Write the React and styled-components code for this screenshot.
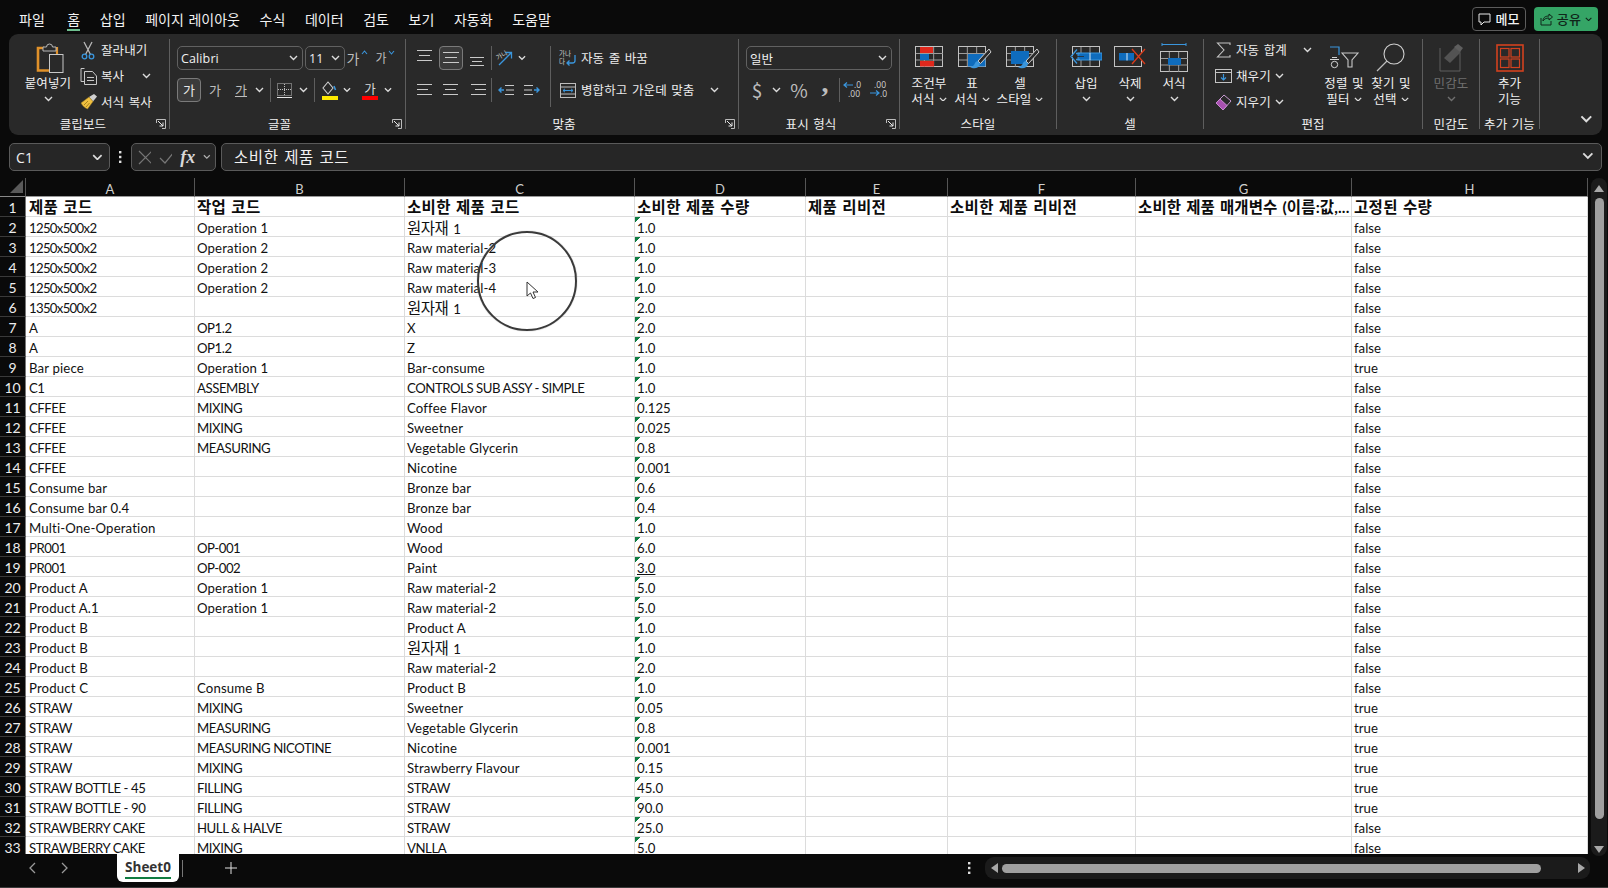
import React from 'react';
import styled, { createGlobalStyle } from 'styled-components';

const UI = '"Noto Sans CJK KR", "Open Sans", sans-serif';
const LAT = '"Open Sans", "Noto Sans CJK KR", sans-serif';
const CELL = 'Lato, "Noto Sans CJK KR", sans-serif';
const TXT = '#ececec';
const GL = '#c9c9c9';
const BL = '#3a96dd';
const DBL = '#0f6cbd';

const Global = createGlobalStyle`
  html, body { margin: 0; padding: 0; background: #0a0a0a; overflow: hidden; }
  * { box-sizing: border-box; }
`;

const Page = styled.div`
  width: 1608px; height: 888px; display: flex; flex-direction: column;
  background: #0a0a0a; color: ${TXT}; font: 12.5px/16px ${UI}; overflow: hidden;
  border-bottom: 1px solid #3a3a3a; letter-spacing: .12px; word-spacing: 1.5px;
`;
const TitleRow = styled.div`display: flex; align-items: flex-start; height: 34px; padding: 0 10px 0 19px;`;
const Tabs = styled.nav`display: flex; gap: 19.6px; padding-top: 9px; letter-spacing: 0;`;
const Tab = styled.div`
  font-size: 14px; line-height: 20px; color: #f2f2f2; height: 22px; margin-left: ${p => (p.$active ? 3 : 0)}px;
  border-bottom: 2px solid ${p => (p.$active ? '#6fbf8f' : 'transparent')};
`;
const Actions = styled.div`display: flex; gap: 8px; margin-left: auto; padding-top: 7px;`;
const MemoBtn = styled.div`
  width: 54px; height: 24px; border: 1px solid #5c5c5c; border-radius: 4px; display: flex;
  align-items: center; justify-content: center; gap: 4px; font-size: 13px; font-weight: 500; color: #f2f2f2;
`;
const ShareBtn = styled.div`
  width: 64px; height: 24px; border-radius: 4px; background: #35a566; display: flex;
  align-items: center; justify-content: center; gap: 4px; font-size: 13px; font-weight: 500; color: #10261a;
`;

const Ribbon = styled.div`
  display: flex; height: 101px; margin: 0 6px 0 9px; background: #292929; border-radius: 9px;
`;
const Group = styled.section`
  width: ${p => p.$w}px; display: flex; flex-direction: column; position: relative; flex: none;
`;
const Sep = styled.div`width: 1px; margin: 5px 0 6px; background: #5e5e5e; flex: none;`;
const Body = styled.div`
  height: 81px; display: flex; padding: ${p => p.$pt ?? 12}px 0 0 ${p => p.$pl ?? 0}px;
`;
const GroupLabel = styled.div`
  height: 18px; line-height: 18px; text-align: center; font-size: 12.5px; color: #f0f0f0; padding-right: ${p => p.$pr ?? 0}px;
`;
const Launcher = styled.svg`position: absolute; right: 3px; bottom: 6px; width: 10px; height: 10px;`;
const Col = styled.div`
  display: flex; flex-direction: column; flex: none; width: ${p => (p.$w ? `${p.$w}px` : 'auto')};
  gap: ${p => p.$gap ?? 0}px; padding-left: ${p => p.$pl ?? 0}px;
`;
const Row = styled.div`display: flex; align-items: center; height: ${p => p.$h ?? 24}px; flex: none;`;
const Slot = styled.div`
  width: ${p => p.$w}px; flex: none; display: flex; align-items: center; justify-content: center;
  height: 24px; color: ${p => p.$c ?? '#bdbdbd'}; font-size: ${p => p.$fs ?? 13}px;
`;
const IconSlot = styled.div`width: 18px; flex: none; display: flex; justify-content: center; margin-right: 4px;`;
const ChevBox = styled.span`display: inline-flex; margin-left: ${p => p.$ml ?? 0}px;`;
const Divider = styled.div`width: 1px; height: ${p => p.$h ?? 24}px; background: #5e5e5e; flex: none;`;
const Combo = styled.div`
  width: ${p => p.$w}px; height: 24px; flex: none; display: flex; align-items: center; justify-content: space-between;
  padding: 0 4px 0 3px; border: 1px solid #616161; border-radius: 5px; font: 12.5px ${LAT}; color: #f0f0f0;
`;
const Pressed = styled.div`
  width: 24px; height: 24px; flex: none; display: flex; align-items: center; justify-content: center;
  border: 1px solid #7a7a7a; border-radius: 4px; background: #3b3b3b; color: #e8e8e8; font-size: 13px;
`;
const Big = styled.div`
  width: ${p => p.$w}px; flex: none; display: flex; flex-direction: column; align-items: center;
  color: ${p => (p.$muted ? '#6f6f6f' : '#f0f0f0')}; margin-top: ${p => p.$mt ?? 0}px;
`;
const BigIcon = styled.div`
  height: 29px; margin: 0 0 3px ${p => p.$ml ?? 0}px; display: flex; align-items: center; justify-content: center;
`;
const Line = styled.div`height: 16px; display: flex; align-items: center; gap: 4px; white-space: nowrap;`;
const CollapseBox = styled.div`flex: 1; display: flex; justify-content: flex-end; align-items: flex-end; padding: 0 9px 12px 0;`;
const Spacer = styled.div`width: ${p => p.$w}px; flex: none;`;
const FontColor = styled.div`display: flex; flex-direction: column; align-items: center; width: 16px; color: #d8d8d8; font-size: 12.5px; line-height: 15px;`;
const ColorBar = styled.div`width: 16px; height: 4px; background: #f00; flex: none;`;
const Grow = styled.span`display: inline-flex; align-items: flex-start; gap: 1px;`;
const Comma = styled.span`font: 700 28px/24px "Liberation Serif", serif; color: #bdbdbd; transform: translateY(-7px);`;

const FormulaRow = styled.div`display: flex; align-items: center; height: 28px; margin: 8px 6px 0 9px;`;
const NameBox = styled.div`
  width: 101px; height: 28px; flex: none; display: flex; align-items: center; justify-content: space-between;
  padding: 0 6px; background: #262626; border: 1px solid #5a5a5a; border-radius: 5px; font: 14px ${LAT}; color: #f0f0f0;
`;
const Dots = styled.div`width: 21px; flex: none; display: flex; justify-content: center;`;
const FxBox = styled.div`
  width: 85px; height: 28px; flex: none; display: flex; align-items: center; gap: 8px; padding: 0 4px 0 6px;
  background: #262626; border: 1px solid #5a5a5a; border-radius: 5px;
`;
const Fx = styled.span`font: italic 700 18px "Liberation Serif", serif; color: #d8d8d8; letter-spacing: 0;`;
const FormulaInput = styled.div`
  flex: 1; height: 28px; margin-left: 5px; display: flex; align-items: center; justify-content: space-between;
  padding: 0 7px 2px 12px; background: #262626; border: 1px solid #5a5a5a; border-radius: 5px;
  font: 15.5px ${UI}; letter-spacing: .6px; color: #f2f2f2;
`;

const SheetArea = styled.div`display: flex; height: 676px; margin-top: 7px; flex: none;`;
const Sheet = styled.div`
  width: 1588px; height: 676px; overflow: hidden; position: relative; flex: none; display: grid;
  grid-template-columns: 26px 169px 210px 230px 171px 142px 188px 216px 236px;
  grid-auto-rows: 20px; grid-template-rows: 19px; background: #fff; letter-spacing: 0; word-spacing: 0;
`;
const Corner = styled.div`background: #0a0a0a; display: flex; align-items: flex-end; justify-content: flex-end; padding: 0 2px 3px 0; border-right: 1px solid #555; border-bottom: 1px solid #888;`;
const ColHead = styled.div`
  background: #0a0a0a; color: #cfcfcf; font: 13px/22px ${CELL}; text-align: center;
  border-right: 1px solid #555; border-bottom: 1px solid #999;
`;
const RowHead = styled.div`
  background: #0a0a0a; color: #ededed; font: 14px/21px ${CELL}; text-align: center;
  border-bottom: 1px solid #3a3a3a; border-right: 1px solid #777;
`;
const Cell = styled.div`
  background: #fff; color: #111; font: 13.2px/22px ${CELL}; padding-left: ${p => p.$pl ?? 2}px; white-space: nowrap; overflow: hidden;
  border-right: 1px solid #dcdcdc; border-bottom: 1px solid #dcdcdc; letter-spacing: ${p => p.$ls ?? 0}px;
`;
const NumCell = styled(Cell)`
  background: linear-gradient(135deg, #107c41 3.6px, transparent 3.7px) no-repeat #fff;
  text-decoration: ${p => (p.$u ? 'underline' : 'none')};
`;
const HeadCell = styled(Cell)`
  font: 700 15.5px/20px ${CELL}; letter-spacing: ${p => (p.$tight ? '.15px' : '.35px')}; word-spacing: 1px; color: #0c0c0c;
`;
const Kr = styled.span`font-size: 15.5px; margin-right: 2px;`;
const Ring = styled.div`
  position: absolute; left: 477px; top: 53px; width: 100px; height: 100px; border-radius: 50%;
  border: 2px solid #3a3a3a; box-shadow: 0 0 1px #777;
`;
const Pointer = styled.svg`position: absolute; left: 526px; top: 103px;`;

const VScroll = styled.div`
  width: 16px; height: 678px; margin: 0 1px 0 3px; background: #1b1b1b; border-radius: 8px; flex: none;
  display: flex; flex-direction: column; align-items: center; padding-top: 6px;
`;
const VThumb = styled.div`width: 9px; height: 621px; margin-top: 5px; border-radius: 5px; background: #a0a0a0;`;
const VDown = styled.div`margin-top: 26px; display: flex;`;

const BottomBar = styled.div`flex: 1; display: flex; align-items: flex-start; min-height: 0;`;
const Nav = styled.div`width: 117px; height: 28px; display: flex; align-items: center; flex: none; padding-left: 28px; gap: 25px;`;
const SheetTab = styled.div`
  width: 62px; height: 28px; background: #fff; border-radius: 0 0 6px 6px; flex: none; display: flex; justify-content: center;
`;
const SheetName = styled.div`
  font: 700 13.5px/20px ${LAT}; color: #333; height: 25px; padding-top: 3px; border-bottom: 2px solid #107c41; letter-spacing: 0;
`;
const TabSep = styled.div`width: 1px; height: 17px; background: #777; margin: 6px 0 0 3px; flex: none;`;
const PlusBox = styled.div`width: 95px; height: 28px; display: flex; align-items: center; justify-content: center; flex: none;`;
const MoreDots = styled.div`margin-left: auto; width: 16px; height: 28px; display: flex; align-items: center; justify-content: center; flex: none;`;
const HScroll = styled.div`
  width: 605px; height: 22px; margin: 3px 18px 0 8px; background: #1b1b1b; border-radius: 9px; flex: none;
  display: flex; align-items: center; padding: 0 4px 0 5px;
`;
const HThumb = styled.div`width: 539px; height: 9px; margin-left: 3px; border-radius: 5px; background: #a0a0a0;`;
const HRight = styled.div`margin-left: auto; display: flex;`;

const Chev = ({ s = 1, c = '#dcdcdc' }) => (
  <svg width={9 * s} height={5.5 * s} viewBox="0 0 9 5.5"><path d="M1 1l3.5 3.5L8 1" fill="none" stroke={c} strokeWidth="1.4" /></svg>
);
const Tri = ({ d, c = '#a8a8a8' }) => {
  const p = { u: 'M1 8L6 1l5 7z', d: 'M1 1l5 7 5-7z', l: 'M8 1L1 6l7 5z', r: 'M1 1l7 5-7 5z' }[d];
  return <svg width={d === 'u' || d === 'd' ? 12 : 9} height={d === 'u' || d === 'd' ? 9 : 12}><path d={p} fill={c} /></svg>;
};
const Lines = ({ w = 16, rows }) => (
  <svg width={w} height={16}>{rows.map(([a, b, y], i) => <path key={i} d={`M${a} ${y}.5H${b}`} stroke={GL} strokeWidth="1" />)}</svg>
);
const LauncherIcon = () => (
  <Launcher viewBox="0 0 10 10"><path d="M.5 4V.5H9.5V9.5H6" fill="none" stroke="#bcbcbc" /><path d="M2 2l5 5M7 3.5V7H3.5" fill="none" stroke="#e8e8e8" /></Launcher>
);
const PasteIcon = () => (
  <svg width="28" height="30"><path d="M8 5H2V27.5H14" fill="none" stroke="#e0912a" strokeWidth="2.6" /><path d="M18 5h3v6" fill="none" stroke="#e0912a" strokeWidth="2.2" /><path d="M7 8V4h3.5a3 3 0 0 1 6 0H20v4z" fill="#292929" stroke="#b8b8b8" /><rect x="13.5" y="11.5" width="13.5" height="18" fill="#292929" stroke="#c8c8c8" /></svg>
);
const ScissorsIcon = () => (
  <svg width="14" height="19"><path d="M3 1l6.5 12.5M11 1L4.5 13.5" stroke="#b8b8b8" strokeWidth="1.3" fill="none" /><circle cx="3.5" cy="15.5" r="2.3" fill="none" stroke={BL} strokeWidth="1.3" /><circle cx="10.5" cy="15.5" r="2.3" fill="none" stroke={BL} strokeWidth="1.3" /></svg>
);
const CopyIcon = () => (
  <svg width="17" height="17"><path d="M4.5.5H1V13.5H4" fill="none" stroke="#c8c8c8" /><path d="M4.5 3.5v13h12V8l-4-4.5z" fill="none" stroke="#c8c8c8" /><path d="M7 9.5h7M7 12.5h7" stroke="#c8c8c8" /></svg>
);
const BrushIcon = () => (
  <svg width="17" height="16"><path d="M9 3l5-3 3 2.5-4 5z" fill="#cfcfcf" /><path d="M1 9l8-6 4 4.5-5.5 7.5C5 14 2.5 12 1 9z" fill="#f0c040" stroke="#9a7a20" strokeWidth=".5" /><path d="M4 11l4-4M6 13l3.5-4" stroke="#8a6a10" strokeWidth=".7" /></svg>
);
const BorderIcon = () => (
  <svg width="15" height="15"><rect x=".5" y=".5" width="14" height="12" fill="none" stroke="#bdbdbd" strokeDasharray="1 1" /><path d="M7.5 1v12M1 6.5h13" stroke="#bdbdbd" strokeDasharray="1 1" /><path d="M0 14.5h15" stroke="#e8e8e8" /></svg>
);
const FillIcon = () => (
  <svg width="17" height="19"><path d="M7 1L2 7l5 6 5-6z" fill="none" stroke="#cfcfcf" strokeWidth="1.1" /><path d="M13 5l1.5 4" stroke={BL} strokeWidth="1.6" /><rect x="1" y="15" width="16" height="4" fill="#ffea00" /></svg>
);
const SizeCaret = ({ down }) => (
  <svg width="7" height="5"><path d={down ? 'M1 1l2.5 3L6 1' : 'M1 4l2.5-3L6 4'} fill="none" stroke={BL} strokeWidth="1.1" /></svg>
);
const OrientIcon = () => (
  <svg width="18" height="18" overflow="visible"><text x="0" y="9" fontSize="6.5" fill="#cfcfcf" transform="rotate(-30 5 7)" fontFamily="Noto Sans CJK KR">가나</text><path d="M3 16L15 4M9.5 3.5H15.5V9.5" fill="none" stroke={BL} strokeWidth="1.3" /></svg>
);
const IndentIcon = ({ flip }) => (
  <svg width="16" height="14"><g transform={flip ? 'translate(16 0) scale(-1 1)' : undefined}><path d="M7 2.5h9M8 7h8M7 11.5h9" stroke={GL} /><path d="M6 7H1M3.5 4.5L1 7l2.5 2.5" fill="none" stroke={BL} strokeWidth="1.4" /></g></svg>
);
const WrapIcon = () => (
  <svg width="18" height="18" overflow="visible"><text x="0" y="7" fontSize="6.5" fill="#cfcfcf" fontFamily="Noto Sans CJK KR">가나</text><text x="0" y="15" fontSize="6.5" fill="#cfcfcf" fontFamily="Noto Sans CJK KR">다</text><path d="M16 6v5.5a2.5 2.5 0 0 1-2.5 2.5H8M10.5 11.5L8 14l2.5 2.5" fill="none" stroke={BL} strokeWidth="1.3" /></svg>
);
const MergeIcon = () => (
  <svg width="16" height="15"><rect x=".5" y=".5" width="15" height="14" fill="none" stroke="#bdbdbd" /><path d="M1 4h14M1 11h14" stroke="#bdbdbd" /><path d="M3 7.5h10M5 5.8L3 7.5l2 1.7M11 5.8l2 1.7-2 1.7" fill="none" stroke={BL} /></svg>
);
const DecIcon = ({ flip }) => (
  <svg width="24" height="20" overflow="visible" fontFamily="Open Sans" fontSize="8.5" fill="#d4d4d4">
    {flip ? <><text x="6" y="8">.00</text><text x="12" y="17">.0</text><path d="M2 13h9M8 10.5l3 2.5-3 2.5" fill="none" stroke={BL} strokeWidth="1.2" /></> : <><text x="12" y="8">.0</text><text x="6" y="17">.00</text><path d="M11 5H2M5 2.5L2 5l3 2.5" fill="none" stroke={BL} strokeWidth="1.2" /></>}
  </svg>
);
const GridBase = ({ x = 0, children, w = 28, h = 21 }) => (
  <g transform={`translate(${x} 0)`}>
    <rect x=".5" y=".5" width={w - 1} height={h - 1} fill="none" stroke="#c2c2c2" />
    <path d={`M${w / 3} 1V${h}M${(2 * w) / 3} 1V${h}M1 7.5H${w}M1 14H${w}`} stroke="#9c9c9c" />
    {children}
  </g>
);
const Paint = () => (
  <g><path d="M31 3L20 15l2.5 2.5L33 6z" fill="#292929" stroke="#d0d0d0" /><path d="M20 15c-3 0-3 3-4 4-1 1-3 2-4 2 3 2 9 2 10-3z" fill={BL} /></g>
);
const CondIcon = () => (
  <svg width="28" height="24"><GridBase><rect x="5" y="1" width="13" height="6" fill="#e0281c" /><rect x="5" y="8" width="9" height="6" fill={DBL} /><rect x="5" y="15" width="14" height="5.5" fill="#e0281c" /></GridBase></svg>
);
const TableIcon = () => (
  <svg width="28" height="24" overflow="visible"><GridBase><rect x="10" y="8" width="17.5" height="12.5" fill={DBL} /></GridBase><Paint /></svg>
);
const CellIcon = () => (
  <svg width="28" height="24" overflow="visible"><GridBase><rect x="5" y="5" width="18" height="13" fill={DBL} /></GridBase><Paint /></svg>
);
const InsertIcon = () => (
  <svg width="32" height="24"><g transform="translate(2 0)"><rect x=".5" y=".5" width="27" height="20" fill="none" stroke="#c2c2c2" /><path d="M9 1v19M18 1v19" stroke="#9c9c9c" /><rect x="6" y="7" width="24" height="7" fill={DBL} stroke={BL} /><path d="M18 7v7" stroke="#dbe9f7" /></g><path d="M10 7.5H6M10 13.5H6M7 3.5L1 10.5l6 7" fill="none" stroke={BL} strokeWidth="1.3" /><path d="M1.5 10.5H14" stroke="#292929" strokeWidth=".8" /></svg>
);
const DeleteIcon = () => (
  <svg width="32" height="24"><rect x=".5" y=".5" width="27" height="20" fill="none" stroke="#c2c2c2" /><rect x="1" y="7" width="30" height="7.5" fill="#292929" /><path d="M.5 7V1M27.5 7V1M.5 14v7M27.5 14v7" stroke="#c2c2c2" /><rect x="5" y="7" width="15" height="7.5" fill={DBL} /><path d="M13 7v7.5" stroke="#dbe9f7" /><path d="M18 3l13 15M31 3L18 18" stroke="#d83b1a" strokeWidth="1.3" /></svg>
);
const FormatIcon = () => (
  <svg width="28" height="29"><path d="M1 1.5h24M1 0v3M25 0v3" transform="translate(1 0)" stroke={BL} strokeWidth="1" /><g transform="translate(0 8)"><GridBase><rect x="8" y="7" width="13" height="7" fill={DBL} /></GridBase></g></svg>
);
const SigmaIcon = () => <svg width="15" height="16"><path d="M14 3V1H1.5L8 8l-6.5 7H14v-2" fill="none" stroke="#c4c4c4" strokeWidth="1.1" /></svg>;
const FillDownIcon = () => <svg width="17" height="14"><rect x=".5" y=".5" width="16" height="13" fill="none" stroke="#c4c4c4" /><path d="M1 3.5h15" stroke="#c4c4c4" /><path d="M8.5 5v6M6 8.5l2.5 2.5L11 8.5" fill="none" stroke={BL} strokeWidth="1.2" /></svg>;
const EraserIcon = () => <svg width="17" height="17"><path d="M1 9L9 1l7 6-8 9z" fill="none" stroke="#c89ad0" /><path d="M1 9l4-4 7 6.5L8 16z" fill="#a850b0" stroke="#c88ad0" /></svg>;
const SortFilter = () => (
  <svg width="30" height="24" overflow="visible"><path d="M1 1h9v8" fill="none" stroke={BL} strokeWidth="1.2" /><path d="M3 11.5h5M1 13.5h9" stroke="#d4d4d4" /><circle cx="5.5" cy="18.5" r="3.2" fill="none" stroke="#d4d4d4" /><path d="M13 7h16l-6 7v7h-4v-7z" fill="none" stroke="#c8c8c8" strokeWidth="1.1" /></svg>
);
const FindIcon = () => (
  <svg width="30" height="29"><circle cx="18" cy="11" r="10" fill="none" stroke="#cfcfcf" strokeWidth="1.1" /><path d="M11 18L1 28" stroke="#bdbdbd" strokeWidth="1.3" /></svg>
);
const SensIcon = () => (
  <svg width="26" height="29" opacity=".55"><path d="M2 5v23h20V10" fill="none" stroke="#8a8a8a" /><path d="M6 15L17 4l6 5-11 11z" fill="#777" /><path d="M16 4l4-3 5 4-3 4z" fill="#8a8a8a" /></svg>
);
const AddInIcon = () => (
  <svg width="28" height="28"><rect x="1" y="1" width="26" height="26" fill="none" stroke="#d2411f" strokeWidth="1.6" /><g fill="none" stroke="#d2411f" strokeWidth="1.2"><rect x="4.5" y="4.5" width="8.5" height="8.5" /><rect x="15" y="4.5" width="8.5" height="8.5" /><rect x="4.5" y="15" width="8.5" height="8.5" /><rect x="15" y="15" width="8.5" height="8.5" /></g></svg>
);
const XIcon = () => <svg width="15" height="15"><path d="M1 1l13 13M14 1L1 14" stroke="#767676" strokeWidth="1.2" /></svg>;
const CheckIcon = () => <svg width="16" height="13"><path d="M1 7l5 5L15 1" fill="none" stroke="#767676" strokeWidth="1.2" /></svg>;
const VDots = ({ c = '#e0e0e0' }) => <svg width="3" height="12"><g fill={c}><rect y="0" width="2.4" height="2.4" /><rect y="4.8" width="2.4" height="2.4" /><rect y="9.6" width="2.4" height="2.4" /></g></svg>;

const small = [
  [<ScissorsIcon />, '잘라내기'],
  [<CopyIcon />, '복사', 18],
  [<BrushIcon />, '서식 복사'],
];

const COLS = ['A', 'B', 'C', 'D', 'E', 'F', 'G', 'H'];
const HEAD = ['제품 코드', '작업 코드', '소비한 제품 코드', '소비한 제품 수량', '제품 리비전', '소비한 제품 리비전', '소비한 제품 매개변수 (이름:값,...', '고정된 수량'];
const DATA = [
  ['1250x500x2', 'Operation 1', '원자재 1', '1.0', 'false'],
  ['1250x500x2', 'Operation 2', 'Raw material-2', '1.0', 'false'],
  ['1250x500x2', 'Operation 2', 'Raw material-3', '1.0', 'false'],
  ['1250x500x2', 'Operation 2', 'Raw material-4', '1.0', 'false'],
  ['1350x500x2', '', '원자재 1', '2.0', 'false'],
  ['A', 'OP1.2', 'X', '2.0', 'false'],
  ['A', 'OP1.2', 'Z', '1.0', 'false'],
  ['Bar piece', 'Operation 1', 'Bar-consume', '1.0', 'true'],
  ['C1', 'ASSEMBLY', 'CONTROLS SUB ASSY - SIMPLE', '1.0', 'false'],
  ['CFFEE', 'MIXING', 'Coffee Flavor', '0.125', 'false'],
  ['CFFEE', 'MIXING', 'Sweetner', '0.025', 'false'],
  ['CFFEE', 'MEASURING', 'Vegetable Glycerin', '0.8', 'false'],
  ['CFFEE', '', 'Nicotine', '0.001', 'false'],
  ['Consume bar', '', 'Bronze bar', '0.6', 'false'],
  ['Consume bar 0.4', '', 'Bronze bar', '0.4', 'false'],
  ['Multi-One-Operation', '', 'Wood', '1.0', 'false'],
  ['PR001', 'OP-001', 'Wood', '6.0', 'false'],
  ['PR001', 'OP-002', 'Paint', '3.0', 'false'],
  ['Product A', 'Operation 1', 'Raw material-2', '5.0', 'false'],
  ['Product A.1', 'Operation 1', 'Raw material-2', '5.0', 'false'],
  ['Product B', '', 'Product A', '1.0', 'false'],
  ['Product B', '', '원자재 1', '1.0', 'false'],
  ['Product B', '', 'Raw material-2', '2.0', 'false'],
  ['Product C', 'Consume B', 'Product B', '1.0', 'false'],
  ['STRAW', 'MIXING', 'Sweetner', '0.05', 'true'],
  ['STRAW', 'MEASURING', 'Vegetable Glycerin', '0.8', 'true'],
  ['STRAW', 'MEASURING NICOTINE', 'Nicotine', '0.001', 'true'],
  ['STRAW', 'MIXING', 'Strawberry Flavour', '0.15', 'true'],
  ['STRAW BOTTLE - 45', 'FILLING', 'STRAW', '45.0', 'true'],
  ['STRAW BOTTLE - 90', 'FILLING', 'STRAW', '90.0', 'true'],
  ['STRAWBERRY CAKE', 'HULL & HALVE', 'STRAW', '25.0', 'false'],
  ['STRAWBERRY CAKE', 'MIXING', 'VNLLA', '5.0', 'false'],
];
const TABS = ['파일', '홈', '삽입', '페이지 레이아웃', '수식', '데이터', '검토', '보기', '자동화', '도움말'];

const material = v => (v.startsWith('원자재') ? <><Kr>원자재</Kr> 1</> : v);
// Calibri has narrower capitals and digits, and slightly wider lowercase, than Lato.
const tracking = v => {
  if (/^\d+x\d+x\d+$/.test(v)) return -0.7;
  if (/[a-z]/.test(v)) return 0.15;
  return -0.45;
};

export default function App() {
  return (
    <Page>
      <Global />
      <TitleRow>
        <Tabs>{TABS.map(t => <Tab key={t} $active={t === '홈'}>{t}</Tab>)}</Tabs>
        <Actions>
          <MemoBtn><svg width="13" height="13"><path d="M1 1h11v8H6l-3 3V9H1z" fill="none" stroke="#e8e8e8" /></svg>메모</MemoBtn>
          <ShareBtn><svg width="13" height="13"><path d="M1 5v7h10V8M3 8c0-4 3-5 6-5V1l3.5 3L9 7V5c-3 0-5 1-6 3z" fill="none" stroke="#10261a" /></svg>공유<Chev c="#10261a" s={.8} /></ShareBtn>
        </Actions>
      </TitleRow>

      <Ribbon>
        <Group $w={160}>
          <Body $pt={3} $pl={5}>
            <Col $w={65} $pl={3}>
              <Big $w={62} $mt={6}>
                <BigIcon $ml={4}><PasteIcon /></BigIcon>
                <Line>붙여넣기</Line>
                <Line><Chev /></Line>
              </Big>
            </Col>
            <Col>
              {small.map(([icon, label, ml]) => (
                <Row $h={26} key={label}>
                  <IconSlot>{icon}</IconSlot>{label}
                  {ml && <ChevBox $ml={ml}><Chev /></ChevBox>}
                </Row>
              ))}
            </Col>
          </Body>
          <GroupLabel $pr={12}>클립보드</GroupLabel>
          <LauncherIcon />
        </Group>
        <Sep />

        <Group $w={235}>
          <Body $pl={7}>
            <Col $gap={8}>
              <Row>
                <Combo $w={126}>Calibri<Chev /></Combo>
                <Spacer $w={2} />
                <Combo $w={40}>11<Chev /></Combo>
                <Slot $w={24} $fs={14}><Grow>가<SizeCaret /></Grow></Slot>
                <Slot $w={32} $fs={12}><Grow>가<SizeCaret down /></Grow></Slot>
              </Row>
              <Row>
                <Pressed>가</Pressed>
                <Slot $w={28}>가</Slot>
                <Slot $w={24}><u>가</u></Slot>
                <Slot $w={12}><Chev /></Slot>
                <Spacer $w={5} /><Divider />
                <Slot $w={26}><BorderIcon /></Slot>
                <Slot $w={12}><Chev /></Slot>
                <Spacer $w={5} /><Divider />
                <Slot $w={28}><FillIcon /></Slot>
                <Slot $w={8}><Chev /></Slot>
                <Spacer $w={5} />
                <Slot $w={28}><FontColor>가<ColorBar /></FontColor></Slot>
                <Slot $w={8}><Chev /></Slot>
              </Row>
            </Col>
          </Body>
          <GroupLabel $pr={16}>글꼴</GroupLabel>
          <LauncherIcon />
        </Group>
        <Sep />

        <Group $w={332}>
          <Body $pl={8}>
            <Col $w={136} $gap={8}>
              <Row>
                <Slot $w={22}><Lines rows={[[0, 15, 0], [2, 13, 5], [0, 15, 10]]} /></Slot>
                <Spacer $w={3} />
                <Pressed><Lines rows={[[0, 16, 2], [2, 14, 7], [0, 16, 12]]} /></Pressed>
                <Slot $w={28}><Lines rows={[[1, 15, 7], [3, 13, 11], [1, 15, 15]]} /></Slot>
                <Divider />
                <Slot $w={26}><OrientIcon /></Slot>
                <Slot $w={8}><Chev /></Slot>
              </Row>
              <Row>
                <Slot $w={22}><Lines rows={[[0, 15, 2], [0, 11, 7], [0, 15, 12]]} /></Slot>
                <Slot $w={30}><Lines rows={[[0, 15, 2], [2, 13, 7], [0, 15, 12]]} /></Slot>
                <Slot $w={25}><Lines rows={[[0, 15, 2], [4, 15, 7], [0, 15, 12]]} /></Slot>
                <Divider />
                <Slot $w={28}><IndentIcon /></Slot>
                <Slot $w={24}><IndentIcon flip /></Slot>
              </Row>
            </Col>
            <Divider $h={61} />
            <Col $pl={8} $gap={8}>
              <Row><IconSlot><WrapIcon /></IconSlot>자동 줄 바꿈</Row>
              <Row>
                <IconSlot><MergeIcon /></IconSlot>병합하고 가운데 맞춤
                <ChevBox $ml={16}><Chev /></ChevBox>
              </Row>
            </Col>
          </Body>
          <GroupLabel $pr={16}>맞춤</GroupLabel>
          <LauncherIcon />
        </Group>
        <Sep />

        <Group $w={160}>
          <Body $pl={7}>
            <Col $gap={8}>
              <Row><Combo $w={146}>일반<Chev /></Combo></Row>
              <Row>
                <Slot $w={22} $fs={19}>$</Slot>
                <Slot $w={16}><Chev /></Slot>
                <Slot $w={30} $fs={19}>%</Slot>
                <Slot $w={22}><Comma>,</Comma></Slot>
                <Spacer $w={3} /><Divider />
                <Slot $w={28}><DecIcon /></Slot>
                <Slot $w={24}><DecIcon flip /></Slot>
              </Row>
            </Col>
          </Body>
          <GroupLabel $pr={16}>표시 형식</GroupLabel>
          <LauncherIcon />
        </Group>
        <Sep />

        <Group $w={156}>
          <Body $pt={9} $pl={6}>
            <Big $w={46}><BigIcon><CondIcon /></BigIcon><Line>조건부</Line><Line>서식<Chev s={.9} /></Line></Big>
            <Big $w={40}><BigIcon><TableIcon /></BigIcon><Line>표</Line><Line>서식<Chev s={.9} /></Line></Big>
            <Big $w={56}><BigIcon><CellIcon /></BigIcon><Line>셀</Line><Line>스타일<Chev s={.9} /></Line></Big>
          </Body>
          <GroupLabel>스타일</GroupLabel>
        </Group>
        <Sep />

        <Group $w={146}>
          <Body $pt={9} $pl={7}>
            <Big $w={44}><BigIcon><InsertIcon /></BigIcon><Line>삽입</Line><Line><Chev /></Line></Big>
            <Big $w={44}><BigIcon><DeleteIcon /></BigIcon><Line>삭제</Line><Line><Chev /></Line></Big>
            <Big $w={44}><BigIcon><FormatIcon /></BigIcon><Line>서식</Line><Line><Chev /></Line></Big>
          </Body>
          <GroupLabel>셀</GroupLabel>
        </Group>
        <Sep />

        <Group $w={218}>
          <Body $pt={3} $pl={10}>
            <Col $w={108}>
              <Row $h={26}><IconSlot><SigmaIcon /></IconSlot>자동 합계<ChevBox $ml={16}><Chev /></ChevBox></Row>
              <Row $h={26}><IconSlot><FillDownIcon /></IconSlot>채우기<ChevBox $ml={4}><Chev /></ChevBox></Row>
              <Row $h={26}><IconSlot><EraserIcon /></IconSlot>지우기<ChevBox $ml={4}><Chev /></ChevBox></Row>
            </Col>
            <Big $w={44} $mt={6}><BigIcon><SortFilter /></BigIcon><Line>정렬 및</Line><Line>필터<Chev s={.9} /></Line></Big>
            <Big $w={50} $mt={6}><BigIcon><FindIcon /></BigIcon><Line>찾기 및</Line><Line>선택<Chev s={.9} /></Line></Big>
          </Body>
          <GroupLabel>편집</GroupLabel>
        </Group>
        <Sep />

        <Group $w={56}>
          <Body $pt={9}>
            <Big $w={56} $muted><BigIcon><SensIcon /></BigIcon><Line>민감도</Line><Line><Chev c="#6f6f6f" /></Line></Big>
          </Body>
          <GroupLabel>민감도</GroupLabel>
        </Group>
        <Sep />

        <Group $w={59}>
          <Body $pt={9}>
            <Big $w={59}><BigIcon><AddInIcon /></BigIcon><Line>추가</Line><Line>기능</Line></Big>
          </Body>
          <GroupLabel>추가 기능</GroupLabel>
        </Group>
        <Sep />
        <CollapseBox><Chev s={1.4} /></CollapseBox>
      </Ribbon>

      <FormulaRow>
        <NameBox>C1<Chev s={1.2} /></NameBox>
        <Dots><VDots /></Dots>
        <FxBox><XIcon /><CheckIcon /><Fx>fx</Fx><Chev c="#b0b0b0" /></FxBox>
        <FormulaInput>소비한 제품 코드<Chev s={1.3} /></FormulaInput>
      </FormulaRow>

      <SheetArea>
        <Sheet>
          <Corner><svg width="13" height="13"><path d="M13 0v13H0z" fill="#5a5a5a" /></svg></Corner>
          {COLS.map(c => <ColHead key={c}>{c}</ColHead>)}
          <RowHead>1</RowHead>
          {HEAD.map((h, i) => <HeadCell key={h} $pl={i === 0 ? 3 : 2} $tight={i === 6}>{h}</HeadCell>)}
          {DATA.map((r, i) => (
            <React.Fragment key={i}>
              <RowHead>{i + 2}</RowHead>
              <Cell $pl={3} $ls={tracking(r[0])}>{r[0]}</Cell>
              <Cell $ls={tracking(r[1])}>{r[1]}</Cell>
              <Cell $ls={tracking(r[2])}>{material(r[2])}</Cell>
              <NumCell $u={i === 17}>{r[3]}</NumCell>
              <Cell /><Cell /><Cell />
              <Cell>{r[4]}</Cell>
            </React.Fragment>
          ))}
          <Ring />
          <Pointer width="13" height="19" viewBox="0 0 13 19"><path d="M1 1v14l3.5-3 2.5 5.5 2.5-1-2.5-5.5H12z" fill="#fff" stroke="#333" /></Pointer>
        </Sheet>
        <VScroll>
          <Tri d="u" />
          <VThumb />
          <VDown><Tri d="d" /></VDown>
        </VScroll>
      </SheetArea>

      <BottomBar>
        <Nav>
          <svg width="8" height="12"><path d="M7 1L2 6l5 5" fill="none" stroke="#9a9a9a" strokeWidth="1.3" /></svg>
          <svg width="8" height="12"><path d="M1 1l5 5-5 5" fill="none" stroke="#9a9a9a" strokeWidth="1.3" /></svg>
        </Nav>
        <SheetTab><SheetName>Sheet0</SheetName></SheetTab>
        <TabSep />
        <PlusBox><svg width="12" height="12"><path d="M6 0v12M0 6h12" stroke="#e0e0e0" /></svg></PlusBox>
        <MoreDots><VDots /></MoreDots>
        <HScroll>
          <Tri d="l" />
          <HThumb />
          <HRight><Tri d="r" /></HRight>
        </HScroll>
      </BottomBar>
    </Page>
  );
}
